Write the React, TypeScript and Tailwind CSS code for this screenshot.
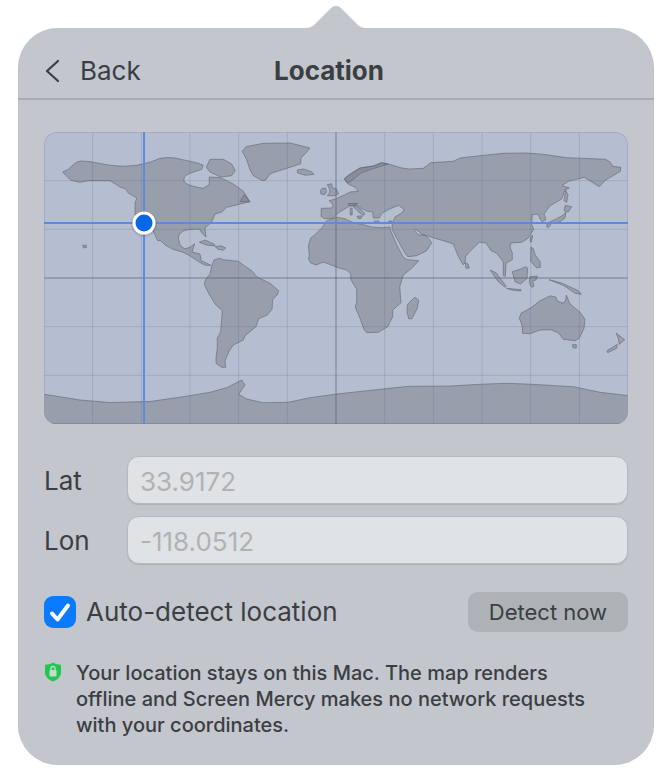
import { useState } from "react";

const LAND = [
  // Americas
  "M18.7 40L24.3 37.3L31 31.3Q34 29 37.7 29L46 29.7L62.7 32.7Q71 34 79.3 34.3L92.7 33.3L106 30.3L116 26.3Q124 25 131 26L146 29.3L154.3 31.3L159.3 33.3L157.7 37.3L146 41.3Q141 43 140 46L140 49.3Q142 52 146 53.3L154 55.5L159.3 56.3L165.3 52.7V45L176.7 45.7L189.3 52L199.3 59.3L206 69.7L182.7 75.3L177.7 80L171 82L167.7 90L161 96L162 105L158.7 102L155.3 97L146 97.5Q140 98 137.7 100Q134 103 134.3 106L136 112.7Q138 116 141 116.7L146 115.3L150.7 111.7L148 120L156 122L157.3 128.7L164.3 132L166.7 133.3L161 133.3L155.3 130L145 123.3L139 120.3L129 117.3L121 113L116.7 108.7H113.7L108.7 97.7L100 92L91 82.7V71L92.7 66L84.3 61L81.3 56.7L76 55L66 48.7H44.3L36 50.3L26.7 48.3Z",
  "M166 27.3H179.3L187.7 32L191.3 38.7L187.7 43.7L176.7 45L166 40L162.3 35.3Z",
  "M200.3 62.7L206 69.7H196Z",
  "M198.3 19.3L202 14.7L219.3 11.3L246 11L266 16L262.7 20L257 26L256.7 31.7L246 35.3L226 41.7L222 47.7L218.7 48.7L209.3 43.7L206 37.7L202.7 27.7Z",
  "M253.3 38L259.3 37L267.7 39.7L270 42.3L261 43.3L253.3 40.7Z",
  "M155.3 110.3L161 108L170 112L171 114L162.7 113Z",
  "M171.3 114.7L176.7 113.7L181.7 116L179.3 118.3L174 117.3Z",
  "M38.7 113.3H42.3V115.7H39.3Z",
  "M167.7 134L170 128L175.3 126.3L179.3 127.7L194.3 129.3L199.3 133L207.7 138.7L212.7 144.7L226 151.3L234.7 158.7L233.3 162.7L228.7 167.3L228 177.3L223.3 183L214.7 186.7L212 194.7L201 203.7L199.3 208L189.3 213L185.3 218.7L181 228.7L181.7 235.3H177.7L172 231.3V225.3L173.3 216.3V206.3L176.7 199.7L178.3 178.7L171 172L164.3 160.7L160.3 152.3L161.3 148L166 142Z",
  // Europe and Asia
  "M300.3 46.7L305.3 42.7L316 36L329.3 34L337.7 30.7L344.3 32L357.7 36L366 37L379.3 36.3L386.7 30.7L409.3 29.3L416 26L436 23.7L459.3 21.3L482.7 21L499.3 22.3L522.7 25.7L561.7 27.3L566 30L568.7 34.3L576.7 35.3L576.3 39.3L561.3 48.3L555.3 54.7L540.3 45.3L524.3 49.3L518 53.7L525.3 56L521 57.7L517.7 67L506 73.7L500 82L502 87.7L498 89.7L496 86.7L494 82L488.3 82.7L487.7 92.7L489.7 97L484.3 106L477.7 110.3L466.7 111L466 115.3L468.3 121V127.7L462 131L461.3 144.3L459.3 143.7V130L452.7 121L447 118.7L442 111L435.3 110.3L426 119.3L421.7 124.3L421 131L419 132.7L414.3 124.3L409.3 112L399.3 108.7L386.7 105L377.7 102L371.3 97L370.7 98.7L374.3 102.7L381 103.3L384.3 106L387.7 111L382.7 118.7L372.7 123.7L363.7 124.7L360.3 120L354.3 109.3L348.3 97.7L348 95.3L348.3 91L351 85L357.7 81L360.3 77.7L354.7 73.3L346 76.7L338 81.3L335.3 86H329.3L328.7 80L323.3 79.3L316.7 76L312.7 73.3L305.3 74.3L301 76.7L294.3 81L289.3 86L281 86.7L277 84.3L277.3 76.3L287.7 76L289.3 73.3L285.3 68.7L291 67L301 62.7L306 60L314.3 59.3L311 55.3L304.3 52Z",
  "M300.3 46.7L305.3 42.7L316 36L329.3 34L337.7 30.7L344.3 32L331 36L317 41L306 50L303 51Z",
  "M311 73.5L317.5 78L321 82L319 83.5L314 79.5L309 74.5Z",
  "M304 71.5H314L311 73L305 73.5Z",
  "M306.3 76H308.2V83H306.3Z",
  "M313.3 84H318.3L317 86.5H314Z",
  "M330.3 89H335V91.3H330.3Z",
  "M344.7 89H347.7V91.3H345.5Z",
  "M283.3 52.7L287.7 51.7L288.3 56L292 56.7L294.7 61.7L291 63.7H283.3L286 60L285.3 56.7Z",
  "M278 56.5L281.5 56L282.5 60L280.5 62.7L277 62L276.2 59Z",
  "M421.3 130.7L424 132L425.3 136L422 136.3Z",
  "M521.7 58.3L524 62.7L522.7 70.3L520 68.7Z",
  "M521.3 73.3L527.7 74.7L524.3 80L520 78.7Z",
  "M522 80L521 86L516 90L507.7 91L504.3 95.7L502.7 94.7L503.3 91L512.7 86.7L518.7 83.3Z",
  "M487 104.3L488.7 103.3L487.3 110.3L486 108.7Z",
  "M487 115L489.3 116.7L491.3 123.3L496 129.3L496.3 135.3L492.7 136L486.7 129.3Z",
  "M446 138L452 140.7L462 154L461.3 155.3L454.3 149.7Z",
  "M462.7 156.3L477 157.7L476.7 159L467.7 158Z",
  "M468.3 139.7L476 137.3L481.7 134.7L483.7 136.3L483 146.3L476.7 152L471 149.7Z",
  "M486 144.7L493.3 144L492 148L488.7 149L490 154L487.7 155.3L485.3 150.7Z",
  // Africa
  "M292.7 85.3L282.7 88.7L277.7 96L271 102.7L266.7 106L264.3 114.3L265.3 122.7L264.5 127L266.7 131L272 133L279.3 130L296 136.3L302.7 138L306.7 142L307 148L312.7 157.3V169.7L311.3 175.3L316 186.3L320.3 198L322.7 200.7L334.3 200.3L343.7 194.7L348.7 184.7V178L357 170.7L355.7 154.7L359.3 143L367.7 136.3L374.7 128.7L363.3 127.7L359.3 125.3L352.7 112.7L346 97V95L337.7 95.7L327.7 95L319.3 92.7L309.3 90.7L301 86.7Z",
  "M371 165.3L374.7 168L373.3 176.3L368 186.7H364.7L363 179.7L363.3 173L367.7 168Z",
  // Oceania
  "M505 147.7L517.7 151L534.3 158.7L537.3 162.3L531 161.3L519.3 153.3Z",
  "M475.3 186.3L477 181.3L487.7 175.3L496 168.7L506.7 163.7L512 165.3L513.3 169L519.3 171.3L521.7 168L522.3 163L526 172L536 180.3L541 187.3L540 196.3L535.3 206.3L531 208.7L519.3 207.3L514.3 200.7L506.7 197.7L496 198L486 201.7L478.7 201.3L478 193Z",
  "M528.3 212.7H532.3V216H529.3Z",
  "M572 201L580.7 207.7L575.3 212.3L574.3 206.3Z",
  "M573.3 212.3L572.7 216.3L563.7 220.7L563 218.7Z",
  // Antarctica
  "M-1 262L36 268L66 270.5L106 269.5L146 263.7L166 260.3L182.7 255.7L197.7 248L201 253L194.7 262.3L202.7 267L219.3 270.7L244.3 270.3L266 265.7L292.7 262L364.3 254.3L406 254L436 252.3L462.7 251.3L487.7 252.3L529.3 254.7L556 260.3L585 263.7V291.5H-1Z",
];

const STEPS = [1, 2, 3, 4, 5, 6, 7, 8, 9, 10, 11];
const STEP = 584 / 12;

const WorldMap = ({ lat, lon }: { lat: number; lon: number }) => {
  const x = Math.floor(((lon + 180) / 360) * 584);
  const y = Math.round(((90 - lat) / 180) * 292);

  return (
    <div className="overflow-hidden rounded-xl bg-[#b5bed0]">
      <svg
        viewBox="0 0 584 292"
        className="block w-full"
        role="img"
        aria-label="World map"
      >
        <g
          fill="#757780"
          fillOpacity="0.45"
          stroke="#5f6470"
          strokeOpacity="0.75"
          strokeWidth="0.8"
          strokeLinejoin="round"
        >
          {LAND.map((d) => (
            <path key={d} d={d} />
          ))}
        </g>
        <g stroke="#4f6080" strokeOpacity="0.2">
          {STEPS.map((i) => (
            <line key={i} x1={i * STEP} x2={i * STEP} y1="0" y2="292" />
          ))}
          {STEPS.slice(0, 5).map((i) => (
            <line key={i} x1="0" x2="584" y1={i * STEP} y2={i * STEP} />
          ))}
        </g>
        <g stroke="#4f5a70" strokeOpacity="0.35" strokeWidth="1.5">
          <line x1="292" x2="292" y1="0" y2="292" />
          <line x1="0" x2="584" y1="146" y2="146" />
        </g>
        <rect
          x="0.5"
          y="0.5"
          width="583"
          height="291"
          rx="11.5"
          fill="none"
          stroke="#8f97a8"
          strokeOpacity="0.4"
        />
        <g stroke="#5a8bdc" strokeWidth="2">
          <line x1={x} x2={x} y1="0" y2="292" />
          <line x1="0" x2="584" y1={y} y2={y} />
        </g>
        <circle cx={x} cy={y + 1} r="13" fill="#3d4657" fillOpacity="0.15" />
        <circle cx={x} cy={y} r="11.5" fill="#fff" />
        <circle cx={x} cy={y} r="8.5" fill="#0a66e8" />
      </svg>
    </div>
  );
};

const CoordinateField = ({
  id,
  label,
  placeholder,
}: {
  id: string;
  label: string;
  placeholder: string;
}) => {
  return (
    <div className="flex items-center">
      <label htmlFor={id} className="w-[83px] shrink-0 pt-0.5 text-[26px] leading-8">
        {label}
      </label>
      <input
        id={id}
        type="text"
        placeholder={placeholder}
        className="h-12 min-w-0 flex-1 rounded-xl border border-[#b6babe] bg-[#e0e3e5] px-3 pt-0.5 text-[26px] shadow-[0_1px_1px_#aeb2b6] outline-none placeholder:text-[#b0b2b4]"
      />
    </div>
  );
};

export default function App() {
  const [autoDetect, setAutoDetect] = useState(true);

  return (
    <main className="bg-white pt-1.5 pr-[17px] pb-3 pl-[18px] font-['Inter',sans-serif] text-[#3b3e42]">
      <svg
        viewBox="0 0 60 22"
        className="mx-auto block h-[22px] w-[60px]"
        aria-hidden="true"
      >
        <path
          d="M0 22C6 22 8 19 12 15L23 4Q30 -4 37 4L48 15C52 19 54 22 60 22Z"
          fill="#c3c6cd"
        />
      </svg>

      <section className="rounded-[40px] bg-[#c3c6cd] shadow-[inset_0_0_1px_#aeb3b5]">
        <header className="grid h-[72px] grid-cols-[1fr_auto_1fr] items-center border-b-2 border-[#a8acb0] pt-4 pr-10 pl-6.5">
          <button type="button" className="flex items-center gap-5 text-[26px] leading-8">
            <svg
              viewBox="0 0 16 24"
              className="h-6 w-4"
              fill="none"
              stroke="currentColor"
              strokeWidth="2.2"
              strokeLinecap="round"
              strokeLinejoin="round"
              aria-hidden="true"
            >
              <path d="M14 2L3 12L14 22" />
            </svg>
            Back
          </button>
          <h1 className="text-[26px] leading-8 font-bold">Location</h1>
        </header>

        <div className="px-6.5 pt-8 pb-[27px]">
          <WorldMap lat={33.9172} lon={-118.0512} />

          <div className="mt-8 flex flex-col gap-3">
            <CoordinateField id="lat" label="Lat" placeholder="33.9172" />
            <CoordinateField id="lon" label="Lon" placeholder="-118.0512" />
          </div>

          <div className="mt-7 flex items-center justify-between">
            <label className="flex items-center gap-2.5 text-[26px] leading-8">
              <span className="relative flex size-8">
                <input
                  type="checkbox"
                  checked={autoDetect}
                  onChange={(e) => setAutoDetect(e.target.checked)}
                  className="peer size-8 appearance-none rounded-[9px] bg-[#e0e3e5] checked:bg-[#0a7aff]"
                />
                <svg
                  viewBox="0 0 32 32"
                  className="pointer-events-none absolute inset-0 hidden size-8 peer-checked:block"
                  fill="none"
                  stroke="#fff"
                  strokeWidth="4"
                  strokeLinecap="round"
                  strokeLinejoin="round"
                  aria-hidden="true"
                >
                  <path d="M8 17.5L13.5 23.5L24 9.5" />
                </svg>
              </span>
              Auto-detect location
            </label>
            <button
              type="button"
              className="h-10 w-40 rounded-[10px] bg-[#aeb2b7] text-[22px]"
            >
              Detect now
            </button>
          </div>

          <div className="mt-7 flex items-start gap-3.5 pr-5">
            <svg
              viewBox="0 0 18 20"
              className="mt-0.5 h-5 w-[18px] shrink-0"
              aria-hidden="true"
            >
              <path
                d="M9 0.5C11.5 2 14 2.6 17 2.8V10C17 14.5 13.5 18 9 19.5C4.5 18 1 14.5 1 10V2.8C4 2.6 6.5 2 9 0.5Z"
                fill="#24c552"
              />
              <rect x="5.5" y="8" width="7" height="6.5" rx="1" fill="#c3dccb" />
              <path
                d="M7 8V6.500A2 2 0 0 1 11 6.500V8"
                fill="none"
                stroke="#c3dccb"
                strokeWidth="1.3"
              />
            </svg>
            <p className="text-[20px] leading-[26px] font-medium">
              Your location stays on this Mac. The map renders offline and
              Screen Mercy makes no network requests with your coordinates.
            </p>
          </div>
        </div>
      </section>
    </main>
  );
}
